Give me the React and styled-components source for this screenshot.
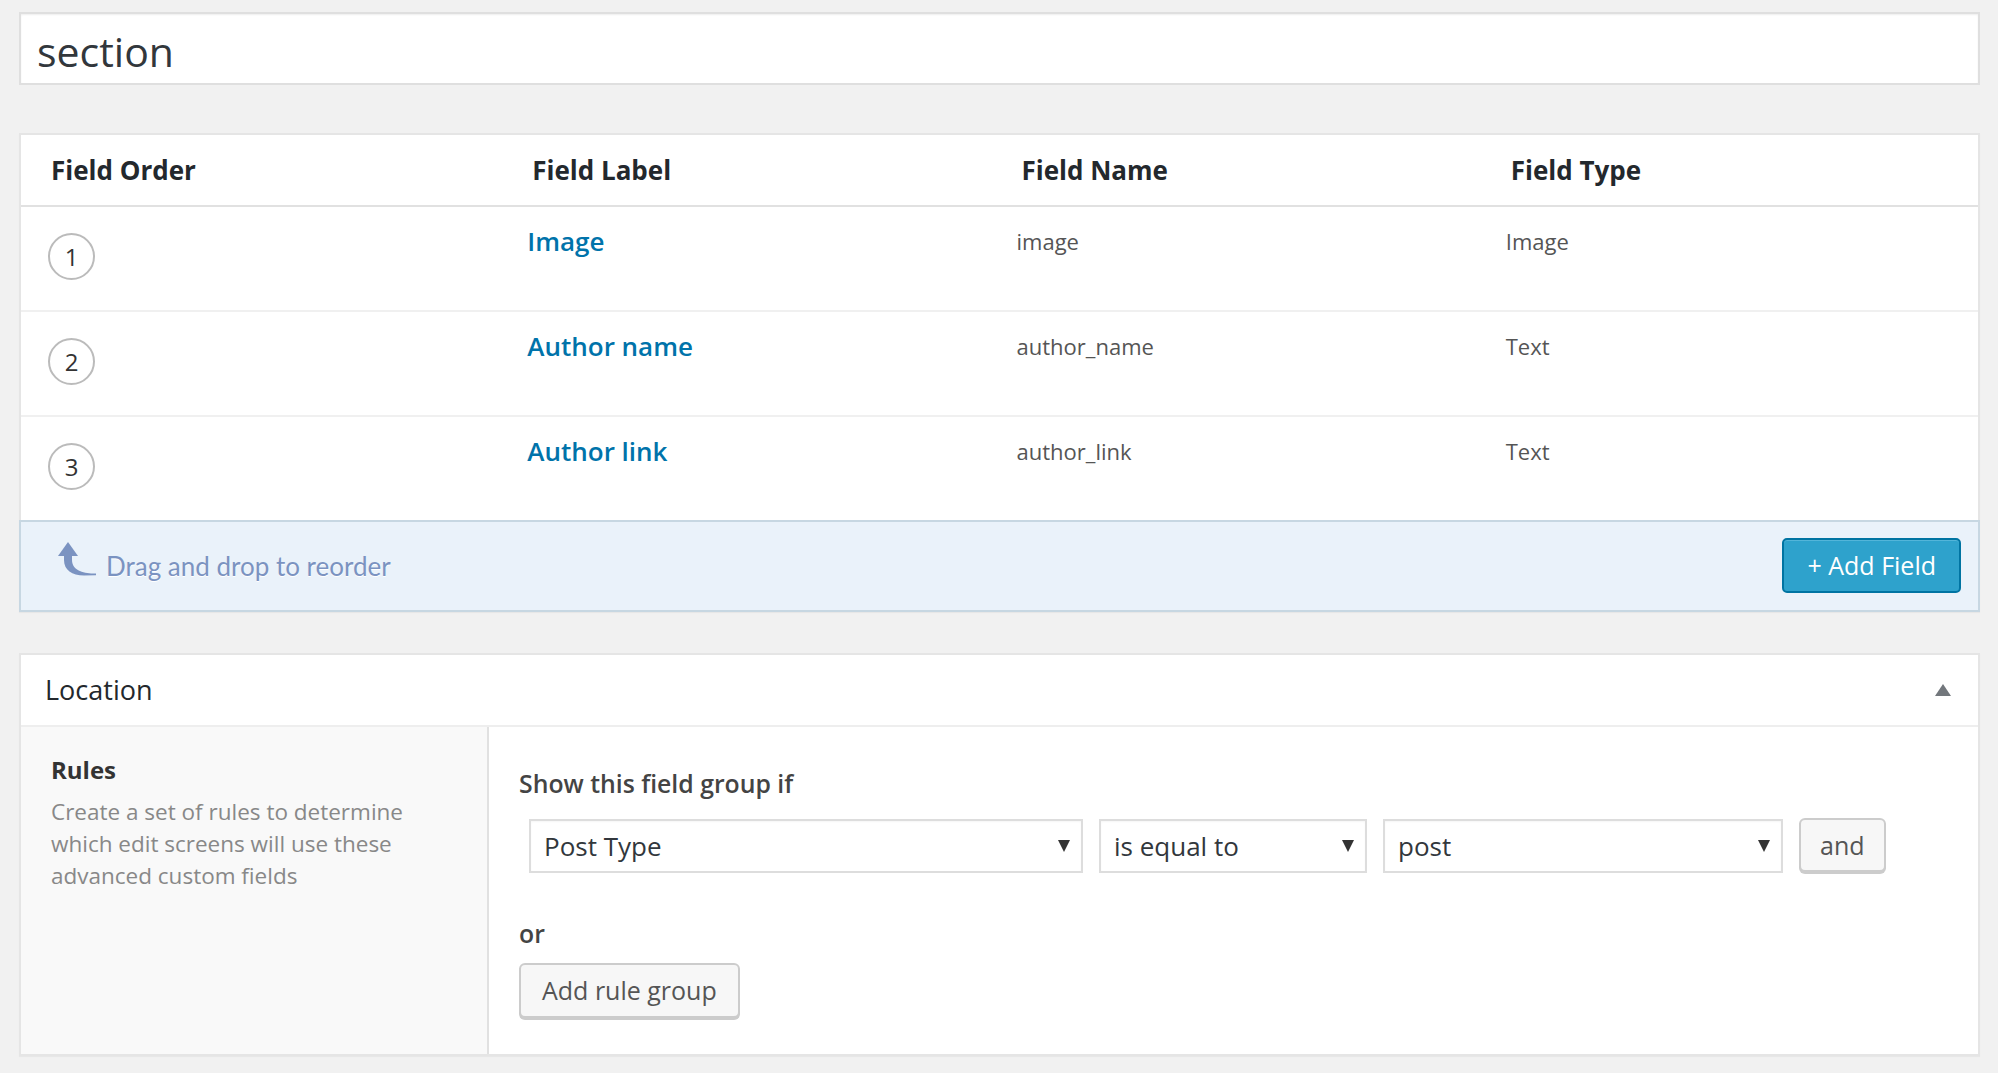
import styled, {createGlobalStyle} from "styled-components";

const GlobalStyle = createGlobalStyle`
    html, body {
        margin: 0;
        padding: 0;
        background: #f1f1f1;
    }
    body {
        font-family: "Open Sans", "Noto Sans", sans-serif;
        color: #444;
    }
    * {
        box-sizing: border-box;
    }
`;

const Page = styled.div`
    padding: 12px 18px 17px 19px;
`;

const TitleBox = styled.div`
    height: 73px;
    background: #fff;
    border: 2px solid #dfdfdf;
    box-shadow: inset 0 1px 2px rgba(0, 0, 0, 0.07);
    padding: 12px 16px 0;
    font-size: 41px;
    line-height: 50px;
    color: #32373c;
`;

const Panel = styled.div`
    background: #fff;
    border: 2px solid #e5e5e5;
    box-shadow: 0 1px 1px rgba(0, 0, 0, 0.04);
    margin-top: ${(p) => p.$top}px;
`;

const FieldsPanel = styled(Panel)`
    border-bottom: none;
`;

const TableRow = styled.div`
    display: grid;
    grid-template-columns: repeat(4, 1fr);
    height: ${(p) => (p.$head ? 72 : p.$last ? 103 : 105)}px;
    border-bottom: ${(p) => (p.$last ? "none" : `2px solid ${p.$head ? "#e1e1e1" : "#f0f0f0"}`)};
`;

const HeadCell = styled.div`
    display: flex;
    align-items: center;
    padding-left: ${(p) => (p.$first ? 30 : 22)}px;
    font-size: 26px;
    font-weight: 700;
    line-height: 36px;
    color: #23282d;
`;

const Cell = styled.div`
    padding-top: 16px;
    padding-left: ${(p) => (p.$first ? 27 : 17)}px;
    font-size: 22px;
    line-height: 36px;
    color: #555;
`;

const OrderCircle = styled.div`
    width: 47px;
    height: 47px;
    margin-top: 10px;
    border: 2px solid #bbb;
    border-radius: 50%;
    display: flex;
    align-items: center;
    justify-content: center;
    font-size: 24px;
    color: #333;
`;

const FieldLink = styled.a`
    font-size: 26px;
    font-weight: 600;
    color: #0073aa;
    text-decoration: none;
`;

const Footer = styled.div`
    margin: 0 -2px;
    height: 92px;
    background: #eaf2fa;
    border: 2px solid #c7d7e2;
    display: flex;
    align-items: center;
    justify-content: space-between;
    padding: 0 17px 0 36px;
`;

const DragHint = styled.div`
    display: flex;
    align-items: center;
    gap: 9px;
    font-family: "Comic Sans MS", "Lato", sans-serif;
    font-size: 26px;
    line-height: 36px;
    color: #7b93c1;
    text-shadow: 0 1px 0 #fff;

    svg {
        margin-bottom: 14px;
    }
`;

const PrimaryButton = styled.button`
    height: 55px;
    padding: 0 23px;
    background: #2ea2cc;
    border: 2px solid #0074a2;
    border-radius: 5px;
    box-shadow: inset 0 1px 0 rgba(120, 200, 230, 0.5);
    color: #fff;
    font-family: inherit;
    font-size: 25px;
    line-height: 1;
    margin-top: -1px;
`;

const BoxHeader = styled.div`
    height: 72px;
    border-bottom: 2px solid #eee;
    display: flex;
    align-items: center;
    justify-content: space-between;
    padding: 0 27px 0 24px;
    font-size: 27px;
    line-height: 36px;
    color: #23282d;
`;

const ToggleArrow = styled.span`
    width: 0;
    height: 0;
    border-left: 8px solid transparent;
    border-right: 8px solid transparent;
    border-bottom: 12px solid #72777c;
`;

const BoxBody = styled.div`
    display: grid;
    grid-template-columns: 468px 1fr;
`;

const Sidebar = styled.div`
    background: #f9f9f9;
    border-right: 2px solid #e1e1e1;
    padding: 27px 30px;
`;

const SideTitle = styled.div`
    font-size: 24px;
    font-weight: 700;
    line-height: 32px;
    color: #333;
`;

const SideText = styled.p`
    margin: 10px 0 0;
    font-size: 22.5px;
    line-height: 32px;
    color: #888;
`;

const RulesArea = styled.div`
    padding: 39px 30px 36px;
`;

const RuleLabel = styled.div`
    font-size: 24.8px;
    font-weight: 600;
    line-height: 34px;
    color: #444;
    margin-top: ${(p) => p.$top || 0}px;
`;

const RuleRow = styled.div`
    display: flex;
    align-items: center;
    gap: 16px;
    margin: 19px 0 0 10px;
`;

const SelectBox = styled.div`
    width: ${(p) => p.$w}px;
    height: 54px;
    border: 2px solid #ddd;
    background: #fff;
    display: flex;
    align-items: center;
    padding-left: 13px;
    font-size: 26px;
    color: #32373c;
    box-shadow: inset 0 1px 2px rgba(0, 0, 0, 0.04);
`;

const Caret = styled.span`
    margin-left: auto;
    margin-right: 11px;
    width: 0;
    height: 0;
    border-left: 6px solid transparent;
    border-right: 6px solid transparent;
    border-top: 12px solid #333;
`;

const SecondaryButton = styled.button`
    height: ${(p) => p.$h}px;
    padding: 0 ${(p) => p.$pad}px;
    background: #f7f7f7;
    border: 2px solid #ccc;
    border-radius: 6px;
    box-shadow: 0 2px 0 #ccc;
    color: #555;
    font-family: inherit;
    font-size: 25px;
    line-height: 1;
    margin-top: ${(p) => p.$top || 0}px;
`;

const fields = [
    {order: 1, label: "Image", name: "image", type: "Image"},
    {order: 2, label: "Author name", name: "author_name", type: "Text"},
    {order: 3, label: "Author link", name: "author_link", type: "Text"},
];

function DragArrow() {
    return (
        <svg width="40" height="34" viewBox="0 0 40 34">
            <path d="M1 14 L11 0 L21 14 Z" fill="#7b93c1"/>
            <path d="M7 13 L7 18 C7 28 15 33.5 27 33.5 L39 33.2 L39 31.6 C30 31.8 15 30 15 18 L15 13 Z"
                  fill="#7b93c1"/>
        </svg>
    );
}

export default function App() {
    return (
        <>
            <GlobalStyle/>
            <Page>
                <TitleBox>section</TitleBox>

                <FieldsPanel $top={48}>
                    <TableRow $head>
                        <HeadCell $first>Field Order</HeadCell>
                        <HeadCell>Field Label</HeadCell>
                        <HeadCell>Field Name</HeadCell>
                        <HeadCell>Field Type</HeadCell>
                    </TableRow>
                    {fields.map((f, i) => (
                        <TableRow key={f.name} $last={i === fields.length - 1}>
                            <Cell $first>
                                <OrderCircle>{f.order}</OrderCircle>
                            </Cell>
                            <Cell>
                                <FieldLink href="#">{f.label}</FieldLink>
                            </Cell>
                            <Cell>{f.name}</Cell>
                            <Cell>{f.type}</Cell>
                        </TableRow>
                    ))}
                    <Footer>
                        <DragHint>
                            <DragArrow/>
                            Drag and drop to reorder
                        </DragHint>
                        <PrimaryButton>+ Add Field</PrimaryButton>
                    </Footer>
                </FieldsPanel>

                <Panel $top={41}>
                    <BoxHeader>
                        Location
                        <ToggleArrow/>
                    </BoxHeader>
                    <BoxBody>
                        <Sidebar>
                            <SideTitle>Rules</SideTitle>
                            <SideText>
                                Create a set of rules to determine which edit screens will use these advanced custom fields
                            </SideText>
                        </Sidebar>
                        <RulesArea>
                            <RuleLabel>Show this field group if</RuleLabel>
                            <RuleRow>
                                <SelectBox $w={554}>Post Type<Caret/></SelectBox>
                                <SelectBox $w={268}>is equal to<Caret/></SelectBox>
                                <SelectBox $w={400}>post<Caret/></SelectBox>
                                <SecondaryButton $h={54} $pad={19} $top={-2}>and</SecondaryButton>
                            </RuleRow>
                            <RuleLabel $top={43}>or</RuleLabel>
                            <SecondaryButton $h={55} $pad={21} $top={13}>Add rule group</SecondaryButton>
                        </RulesArea>
                    </BoxBody>
                </Panel>
            </Page>
        </>
    );
}
